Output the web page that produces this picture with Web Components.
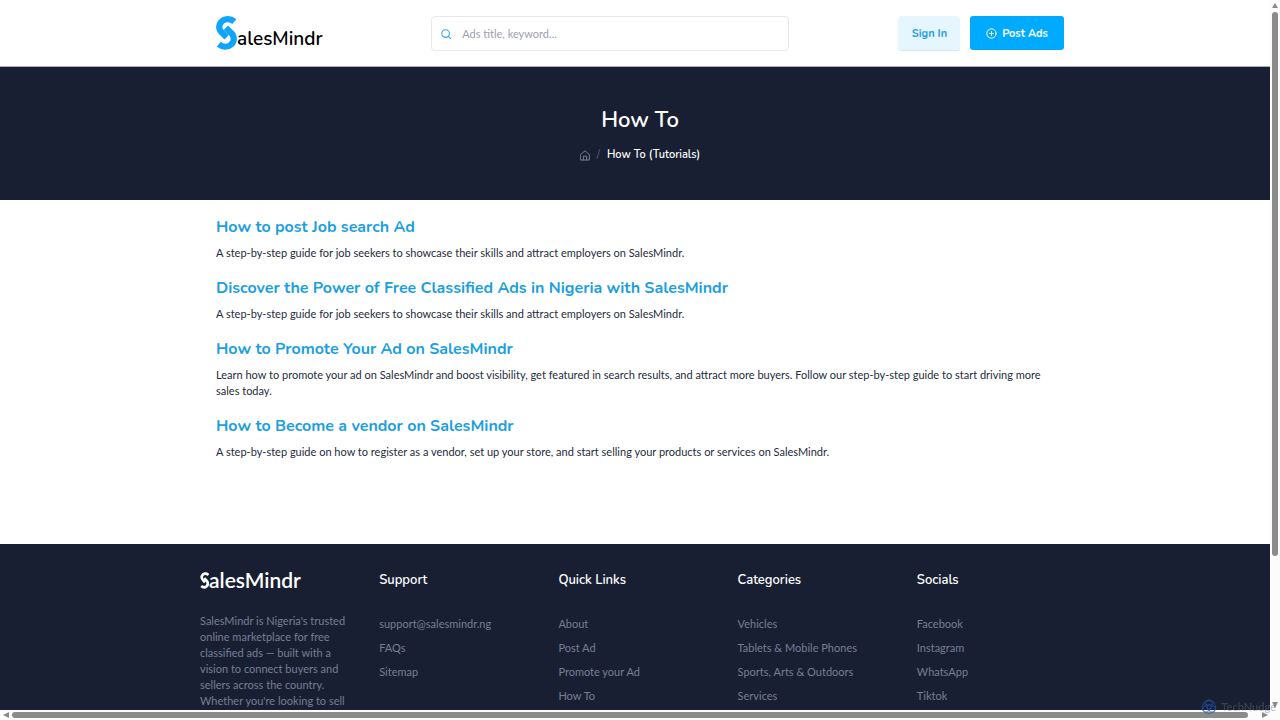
<!DOCTYPE html>
<html lang="en">
<head>
<meta charset="utf-8">
<meta name="viewport" content="width=device-width, initial-scale=1">
<title>How To - SalesMindr</title>
<style>
  :root {
    --ink: #191f33;
    --brand: #00aaff;
    --muted: #767e94;
    --copy: "Lato", "Nunito", sans-serif;
    --display: "Nunito", "Lato", sans-serif;
  }
  body { margin: 0; background: #fff; color: var(--ink); font: 400 11px/16px var(--copy); }
</style>
</head>
<body>
<app-window>
  <site-header></site-header>
  <page-hero heading="How To" crumb="How To (Tutorials)"></page-hero>
  <guide-list>
    <guide-item heading="How to post Job search Ad">A step-by-step guide for job seekers to showcase their skills and attract employers on SalesMindr.</guide-item>
    <guide-item heading="Discover the Power of Free Classified Ads in Nigeria with SalesMindr">A step-by-step guide for job seekers to showcase their skills and attract employers on SalesMindr.</guide-item>
    <guide-item heading="How to Promote Your Ad on SalesMindr">Learn how to promote your ad on SalesMindr and boost visibility, get featured in search results, and attract more buyers. Follow our step-by-step guide to start driving more sales today.</guide-item>
    <guide-item heading="How to Become a vendor on SalesMindr">A step-by-step guide on how to register as a vendor, set up your store, and start selling your products or services on SalesMindr.</guide-item>
  </guide-list>
  <site-footer>
    <footer-about></footer-about>
    <footer-links heading="Support" items="support@salesmindr.ng|FAQs|Sitemap"></footer-links>
    <footer-links heading="Quick Links" items="About|Post Ad|Promote your Ad|How To"></footer-links>
    <footer-links heading="Categories" items="Vehicles|Tablets &amp; Mobile Phones|Sports, Arts &amp; Outdoors|Services"></footer-links>
    <footer-links heading="Socials" items="Facebook|Instagram|WhatsApp|Tiktok"></footer-links>
  </site-footer>
</app-window>
<corner-mark></corner-mark>

<script>
const define = (name, render) => customElements.define(name, class extends HTMLElement {
  connectedCallback() {
    if (this.shadowRoot) return;
    this.attachShadow({ mode: 'open' }).innerHTML = render(this);
  }
});
const esc = s => (s || '').replace(/&/g, '&amp;').replace(/</g, '&lt;');

/* Window with its own slim scroll bars on the right and at the bottom */
define('app-window', () => `
  <style>
    :host { display: grid; grid-template: minmax(0, 1fr) 10px / minmax(0, 1fr) 10px; height: 100vh; background: #fcfcfc; }
    .view { overflow: hidden; background: #fff; }
    .page { width: calc(100% + 10px); }
    scroll-track { grid-area: 1 / 2; }
    scroll-track[across] { grid-area: 2 / 1; }
  </style>
  <div class="view"><div class="page"><slot></slot></div></div>
  <scroll-track thumb="545" rest="140"></scroll-track>
  <scroll-track across thumb="1236" rest="8"></scroll-track>`);

define('scroll-track', el => {
  const across = el.hasAttribute('across');
  const arrow = d => `<svg width="6" height="6" viewBox="0 0 6 6"><path d="${d}" fill="#8b8b8b"/></svg>`;
  return `
  <style>
    :host { display: flex; flex-direction: ${across ? 'row' : 'column'}; align-items: center; gap: 3px; box-sizing: border-box; padding: ${across ? '0 2px 0 3px' : '3px 0 2px'}; }
    i { border-radius: 3px; background: #8b8b8b; ${across ? 'height' : 'width'}: 6px; flex: ${el.getAttribute('thumb')} 0 0; }
    b { flex: ${el.getAttribute('rest')} 0 0; }
    svg { flex: none; }
  </style>
  ${arrow(across ? 'M6 0V6L0 3Z' : 'M0 5H6L3 0Z')}<i></i><b></b>${arrow(across ? 'M0 0V6L6 3Z' : 'M0 0H6L3 6Z')}`;
});

define('brand-logo', () => `
  <style>
    :host { display: block; }
    a { display: flex; align-items: flex-end; color: #000; text-decoration: none; font: 600 19px/22px var(--display); }
    svg { display: block; flex: none; }
  </style>
  <a href="#" aria-label="SalesMindr home">
    <svg width="21" height="34" viewBox="0 0 21 34" fill="none" stroke="#0fa5fb" stroke-width="6.2">
      <path d="M18.3 5.6C13.8 1.6 6.2 2.6 3.8 8.2C2.4 12 3.8 14.8 6 16.8L10.6 21.2"/>
      <path d="M9.8 11.8L15.4 17.2C18.6 20.6 18.6 25.6 15 28.6C11.4 31.6 6.6 31.4 2.8 28.2"/>
    </svg>
    <span>alesMindr</span>
  </a>`);

define('site-header', () => `
  <style>
    :host { display: block; background: #fff; border-bottom: 1px solid #a9b0b9; }
    header { display: flex; align-items: center; justify-content: space-between; box-sizing: border-box; max-width: 880px; margin: 0 auto; padding: 16px; }
    form { display: flex; align-items: center; gap: 11px; box-sizing: border-box; width: 358px; height: 35px; margin: 0 0 -1px; padding: 0 9px; border: 1px solid #e6e8ec; border-radius: 4px; }
    form svg { flex: none; }
    input { flex: 1; min-width: 0; border: 0; padding: 0; outline: 0; background: none; color: var(--ink); font: 400 11px/16px var(--copy); }
    input::placeholder { color: #9ca1ad; opacity: 1; }
    nav { display: flex; gap: 10px; }
    button { display: flex; align-items: center; gap: 5px; height: 34px; border: 0; border-radius: 3px; font: 700 11px/16px var(--display); cursor: pointer; }
    .sign { padding: 1px 13px 0 14px; background: #e6f6ff; color: #1f9fe0; box-shadow: 0 1px 1px #d9e6ee; }
    .post { padding: 1px 16px 0; background: var(--brand); color: #fff; }
  </style>
  <header>
    <brand-logo></brand-logo>
    <form role="search">
      <svg width="10" height="10" viewBox="0 0 10 10" fill="none" stroke="#35a5d6" stroke-width="1.1" stroke-linecap="round"><circle cx="4.6" cy="4.6" r="3.8"/><path d="M7.4 7.4L9.4 9.4"/></svg>
      <input type="text" aria-label="Search ads" placeholder="Ads title, keyword...">
    </form>
    <nav>
      <button type="button" class="sign">Sign In</button>
      <button type="button" class="post">
        <svg width="11" height="11" viewBox="0 0 11 11" fill="none" stroke="#fff" stroke-width="1" stroke-linecap="round"><circle cx="5.5" cy="5.5" r="4.7"/><path d="M3.6 5.5H7.4M5.5 3.6V7.4"/></svg>
        Post Ads
      </button>
    </nav>
  </header>`);

define('page-hero', el => `
  <style>
    :host { display: block; padding: 39px 16px 37px; background: var(--ink); color: #fff; text-align: center; font-family: var(--display); }
    h1 { margin: 0 0 13px; font-size: 22px; line-height: 28px; font-weight: 600; }
    ol { display: flex; justify-content: center; align-items: center; gap: 7px; margin: 0; padding: 0; list-style: none; font-weight: 600; }
    li { display: flex; }
    .sep { color: #5c647b; font-weight: 400; }
    svg { display: block; }
  </style>
  <h1>${esc(el.getAttribute('heading'))}</h1>
  <nav aria-label="Breadcrumb"><ol>
    <li><a href="#" aria-label="Home"><svg width="10" height="11" viewBox="0 0 10 11" fill="none" stroke="#767e94" stroke-width="1" stroke-linejoin="round" stroke-linecap="round"><path d="M.7 4.5L5 .8L9.3 4.5V10H.7Z"/><path d="M3.4 10V6.2H6.6V10"/></svg></a></li>
    <li class="sep" aria-hidden="true">/</li>
    <li>${esc(el.getAttribute('crumb'))}</li>
  </ol></nav>`);

define('guide-list', () => `
  <style>
    :host { display: flex; flex-direction: column; gap: 15px; box-sizing: border-box; max-width: 880px; margin: 0 auto; padding: 15px 16px 84px; }
  </style>
  <slot></slot>`);

define('guide-item', el => `
  <style>
    :host { display: block; }
    h2 { margin: 0 0 6px; font: 700 16px/24px var(--display); }
    a { color: #1c9fe0; text-decoration: none; }
    p { margin: 0; color: #252b3d; }
  </style>
  <h2><a href="#">${esc(el.getAttribute('heading'))}</a></h2>
  <p><slot></slot></p>`);

define('site-footer', () => `
  <style>
    :host { display: block; background: var(--ink); color: var(--muted); }
    footer { display: grid; grid-template-columns: repeat(5, minmax(0, 1fr)); gap: 16px; max-width: 880px; margin: 0 auto; padding: 26px 0 48px; }
  </style>
  <footer><slot></slot></footer>`);

define('footer-about', () => `
  <style>
    :host { display: block; }
    a { display: flex; align-items: center; height: 20px; color: #fff; text-decoration: none; font: 600 21px/20px "Lato", sans-serif; }
    svg { flex: none; }
    p { margin: 23px 12px 0 0; }
  </style>
  <a href="#" aria-label="SalesMindr home">
    <svg width="9" height="17" viewBox="0 0 9 17" fill="none" stroke="#fff" stroke-width="2.7">
      <path d="M8.4 3C6.4.9 3 1.2 1.9 4C1.2 6.2 2.2 7.5 3.4 8.6L5 10.4"/>
      <path d="M4.2 6.2L6.6 8.6C8 10.3 8 12.7 6.6 14.2C5.1 15.7 3 15.6 1.2 14"/>
    </svg><span>alesMindr</span>
  </a>
  <p>SalesMindr is Nigeria's trusted online marketplace for free classified ads — built with a vision to connect buyers and sellers across the country. Whether you're looking to sell</p>`);

define('footer-links', el => `
  <style>
    :host { display: block; }
    h3 { margin: 0 0 22px; color: #fff; font: 600 13px/20px var(--display); }
    ul { margin: 0; padding: 0; list-style: none; line-height: 24px; }
    a { color: inherit; text-decoration: none; }
  </style>
  <h3>${esc(el.getAttribute('heading'))}</h3>
  <ul>${el.getAttribute('items').split('|').map(t => `<li><a href="#">${esc(t)}</a></li>`).join('')}</ul>`);

/* Faint translucent mark that floats over the window's corner */
define('corner-mark', () => `
  <style>
    :host { position: fixed; right: 4px; bottom: 5px; display: flex; align-items: center; gap: 4px; pointer-events: none; color: rgba(110, 112, 116, .4); font: 600 11px/16px var(--copy); }
  </style>
  <svg width="16" height="16" viewBox="0 0 16 16" fill="none" stroke="#2456b0" stroke-opacity=".6" stroke-width="1.1">
    <ellipse cx="8" cy="5.4" rx="3.2" ry="4.4"/><ellipse cx="8" cy="5.4" rx="3.2" ry="4.4" transform="rotate(120 8 8)"/><ellipse cx="8" cy="5.4" rx="3.2" ry="4.4" transform="rotate(240 8 8)"/>
    <circle cx="8" cy="8" r="6.6"/>
  </svg>
  <span>TechNudge</span>`);
</script>
</body>
</html>
